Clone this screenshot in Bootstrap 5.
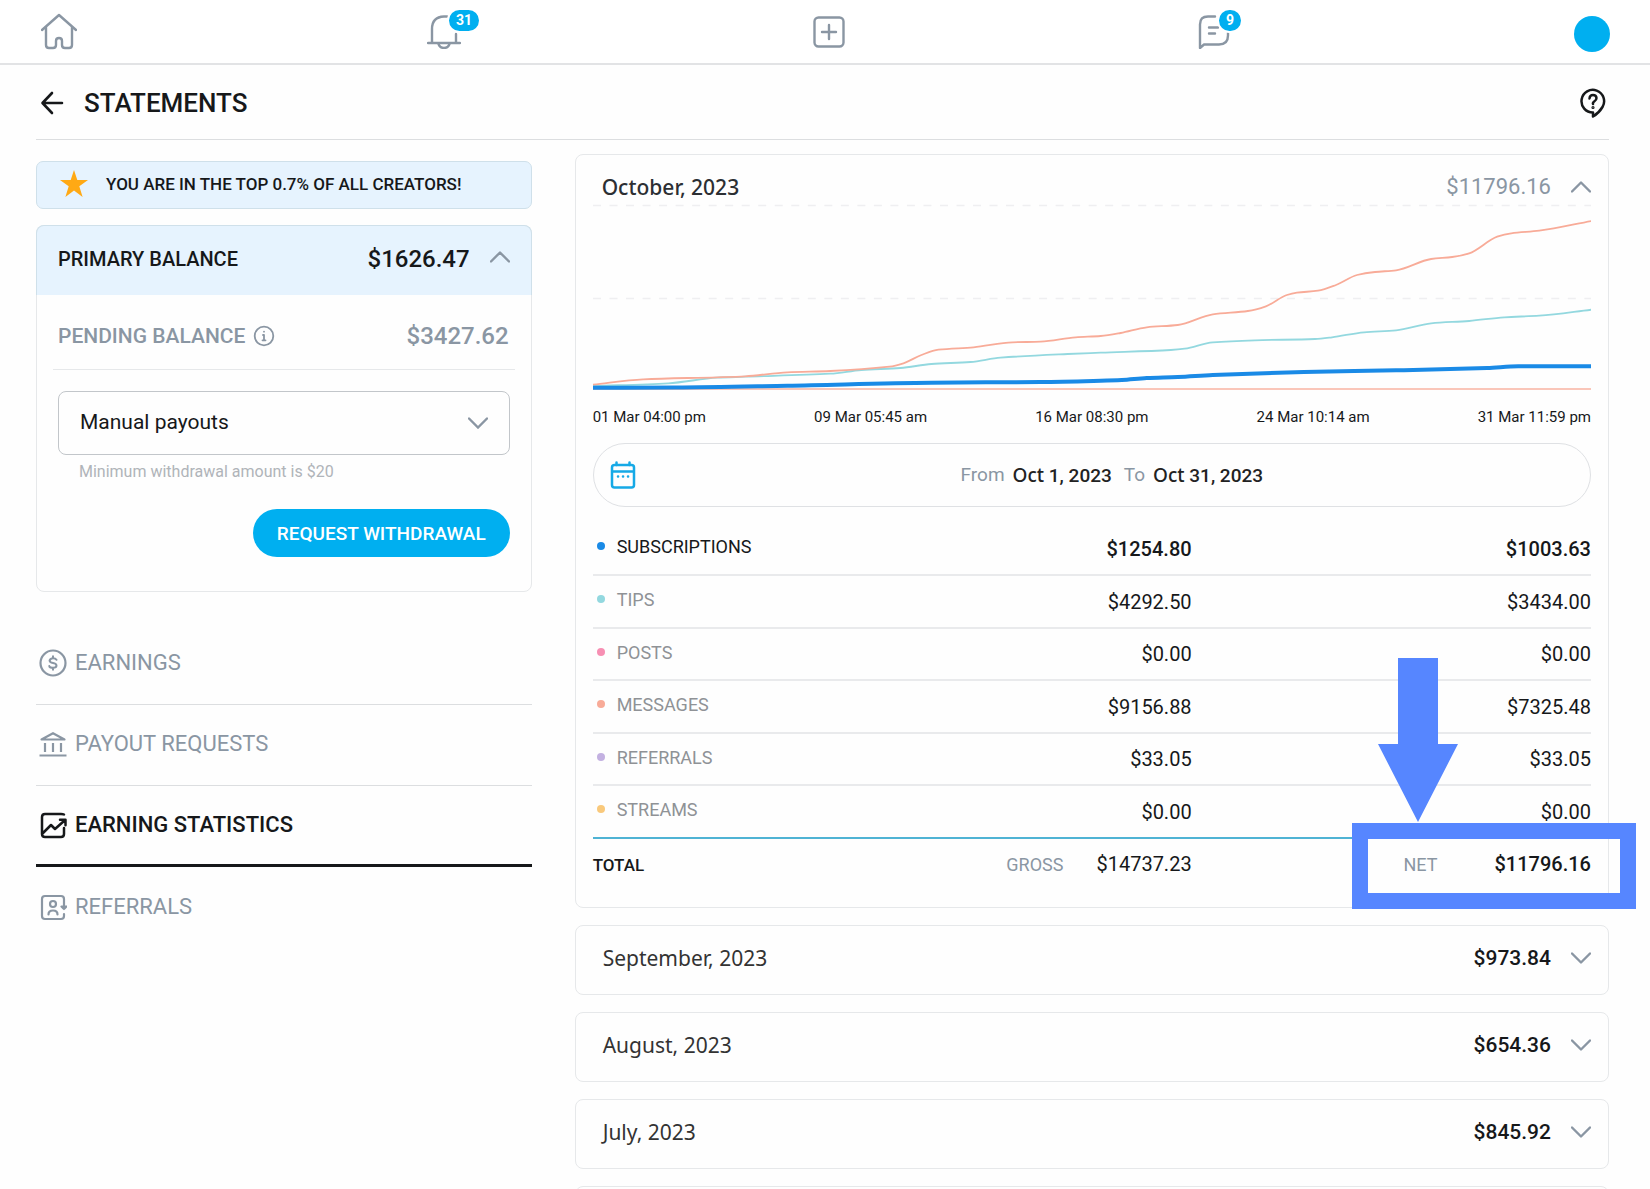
<!DOCTYPE html>
<html lang="en">
<head>
<meta charset="utf-8">
<meta name="viewport" content="width=device-width, initial-scale=1">
<title>Statements</title>
<link href="https://cdn.jsdelivr.net/npm/bootstrap@5.3.0/dist/css/bootstrap.min.css" rel="stylesheet">
<style>
  :root { --ink: #16181a; --muted: #8a96a3; --line: #e6e8ea; --brand: #00aff0; --callout: #5686ff; }
  body { font-family: Roboto, "Liberation Sans", sans-serif; color: var(--ink); background: #fefefe; font-size: 20px; line-height: 24px; height: 100vh; overflow: hidden; }
  svg { display: block; flex: none; }
  .ico { fill: none; stroke: currentColor; stroke-width: 2; stroke-linecap: round; stroke-linejoin: round; }
  a { text-decoration: none; }
  .topbar { height: 65px; padding: 0 26px 0 34px; border-bottom: 2px solid #e2e3e5; color: var(--muted); background: #fff; }
  .topbar a { width: 50px; color: inherit; }
  .count-pill { position: absolute; top: -7px; left: 28px; min-width: 25px; height: 25px; padding: 0 7px; border: 2px solid #fff; border-radius: 13px; background: var(--brand); color: #fff; font-size: 14px; line-height: 21px; font-weight: 700; text-align: center; }
  .avatar-dot { width: 36px; height: 36px; margin-top: 4px; border-radius: 50%; background: var(--brand); }
  .page { padding: 0 41px 0 36px; }
  .page-head { height: 75px; border-bottom: 1px solid #dcdee0; padding: 2px 3px 0 4px; }
  .page-head .title-group { gap: 20px; }
  .page-head h1 { font-size: 26px; line-height: 30px; font-weight: 500; }
  .page-head button, .plain-btn { background: none; border: 0; padding: 0; color: inherit; }
  .split { --bs-gutter-x: 43px; }
  .side { padding-top: 21px; }
  .main-col { padding-top: 14px; }
  .promo { height: 48px; padding: 0 23px 2px; border: 1px solid #cfe0ea; border-radius: 7px; background: #e6f3fe; font-size: 17px; font-weight: 500; gap: 18px; }
  .panel { border: 1px solid var(--line); border-radius: 8px; background: #fefefe; }
  .balance { margin-top: 16px; }
  .balance-head { height: 70px; padding: 0 21px 3px; background: #e6f3fe; border: 1px solid #cfe0ea; border-bottom: 0; border-radius: 8px 8px 0 0; margin: -1px -1px 0; font-weight: 500; }
  .amount-lg { font-size: 24px; }
  .pending { height: 75px; margin: 0 16px; padding: 8px 6px 0 5px; border-bottom: 1px solid var(--line); color: var(--muted); font-size: 21px; font-weight: 500; }
  .payout { padding: 21px 21px 34px; }
  .payout .form-select { height: 64px; padding: 0 56px 0 21px; font-size: 21px; color: var(--ink); border: 1px solid #c2c6ca; border-radius: 8px; background-color: #fefefe; background-position: right 21px center; background-size: 20px 12px; background-image: url("data:image/svg+xml,%3csvg xmlns='http://www.w3.org/2000/svg' viewBox='0 0 20 12'%3e%3cpath fill='none' stroke='%238a96a3' stroke-width='2.4' stroke-linecap='round' d='M1 1.5l9 9 9-9'/%3e%3c/svg%3e"); }
  .payout small { display: block; padding: 5px 21px 0; font-size: 16px; line-height: 24px; color: #b0b4b9; }
  .payout .btn { margin-top: 25px; height: 48px; padding: 2px 23px 0; border-radius: 24px; background: var(--brand); color: #fff; font-size: 19px; font-weight: 500; }
  .side-nav { margin-top: 32px; }
  .side-nav a { height: 81px; gap: 8px; padding: 0 3px 2px; border-bottom: 1px solid #dcdee0; color: var(--muted); font-size: 22px; }
  .side-nav a.current { color: var(--ink); font-weight: 500; border-bottom: 3px solid var(--ink); padding-bottom: 1px; }
  .side-nav a:last-child { border-bottom: 0; }
  .month-name { font-family: "Noto Sans", "Open Sans", sans-serif; color: #333; font-size: 21px; line-height: 24px; font-weight: 400; }
  .month-name.open-month { font-weight: 500; color: #2c2f33; }
  .chev { color: var(--muted); }
  .detail { height: 754px; padding: 0 17px; }
  .detail-head { padding: 18px 0 0 9px; height: 45px; color: var(--muted); }
  .amount-md { font-size: 22px; }
  .chart { width: 100%; height: 192px; }
  .axis-labels { font-size: 15px; line-height: 20px; margin-top: 15px; }
  .range { height: 64px; margin-top: 16px; border: 1px solid #dfe1e4; border-radius: 32px; padding: 0 2px 0 16px; color: var(--muted); font-size: 19px; }
  .range strong { color: #222; font-weight: 500; }
  .range strong i { font-family: "Noto Sans", sans-serif; font-style: normal; }
  .sums { margin-top: 16px; width: 100%; table-layout: fixed; border-collapse: collapse; }
  .sums tr { height: 52px; border-bottom: 2px solid #e9eaec; }
  .sums tr:nth-child(even) { height: 53px; }
  .sums th { font-weight: 400; font-size: 18px; color: #8f9296; padding: 0 0 3px; }
  .sums td { padding: 0; text-align: right; }
  .sums .lead-row th { color: var(--ink); }
  .sums .lead-row td, .sums .net-sum { font-weight: 500; }
  .sums tbody tr:last-child { border-bottom: 2px solid #4fb3d4; }
  .sums tfoot tr { border-bottom: 0; }
  .sums tfoot th { color: var(--ink); font-size: 17px; font-weight: 500; padding: 0; }
  .sums tfoot span { font-size: 18px; color: var(--muted); }
  .dot { display: inline-block; width: 8px; height: 8px; border-radius: 50%; margin: 0 12px 3px 4px; }
  .collapsed { height: 70px; margin-top: 17px; padding: 0 17px 5px 27px; }
  .collapsed .amount-md { font-weight: 500; font-size: 21px; }
  .callout-box { position: absolute; right: -28px; bottom: -2px; width: 284px; height: 86px; border: 16px solid var(--callout); }
  .callout-arrow { position: absolute; right: 150px; bottom: 85px; }
</style>
</head>
<body>
<nav class="topbar d-flex justify-content-between align-items-center">
  <a href="#" class="d-flex justify-content-center" aria-label="Home"><svg class="ico" width="36" height="38" viewBox="0 0 36 38"><path stroke-width="2.400" d="M1 17 18 2l17 15M5 14v18q0 3 3 3h4q3 0 3-3v-4q0-3 3-3t3 3v4q0 3 3 3h4q3 0 3-3V14"/></svg></a>
  <a href="#" class="d-flex justify-content-center position-relative" aria-label="Notifications"><svg class="ico" width="34" height="34" viewBox="0 0 34 34"><path stroke-width="2.400" d="M20 1.500h-3Q5 2 5 14v13M29 19v8M1 28h32M11.500 29q1.500 4 5.500 4t5.500-4"/></svg><span class="count-pill">31</span></a>
  <a href="#" class="d-flex justify-content-center" aria-label="New post"><svg class="ico" width="32" height="32" viewBox="0 0 32 32"><rect x="1.500" y="1.500" width="29" height="29" rx="4" stroke-width="2.400"/><path stroke-width="2.400" d="M16 9v14M9 16h14"/></svg></a>
  <a href="#" class="d-flex justify-content-center position-relative" aria-label="Messages"><svg class="ico" width="32" height="34" viewBox="0 0 32 34"><path stroke-width="2.400" d="M17 1.500h-7Q2 1.500 2 9.500v23.500L6 29.500h15q9 0 9-9v-3M11 12.500h9M11 18.500h6"/></svg><span class="count-pill">9</span></a>
  <a href="#" aria-label="Profile"><span class="avatar-dot d-block"></span></a>
</nav>
<div class="page">
  <header class="page-head d-flex align-items-center justify-content-between">
    <div class="title-group d-flex align-items-center">
      <button type="button" aria-label="Back"><svg class="ico" width="24" height="24" viewBox="0 0 24 24"><path stroke-width="2.600" d="M22 12H3M12 2 2.500 12 12 22"/></svg></button>
      <h1 class="m-0">STATEMENTS</h1>
    </div>
    <button type="button" aria-label="Help"><svg class="ico" width="26" height="30" viewBox="0 0 26 30"><path stroke-width="2.500" d="M13 24.500A11.300 11.300 0 1 1 22.500 19Q19 25 13 28.500z"/><path stroke-width="2.500" d="M9.500 10.500q.3-3.500 3.500-3.500t3.500 3q0 2-2 3.200T13 16"/><circle cx="13" cy="19.500" r=".6" stroke-width="2"/></svg></button>
  </header>
  <div class="row split">
    <aside class="col-4 side">
      <div class="promo d-flex align-items-center"><svg width="28" height="28" viewBox="0 0 28 28"><path fill="#ffa914" d="m14 0 3.300 10H28l-8.700 6.300L22.600 27 14 20.600 5.400 27l3.300-10.700L0 10h10.700z"/></svg>YOU ARE IN THE TOP 0.7% OF ALL CREATORS!</div>
      <section class="panel balance">
        <div class="balance-head d-flex align-items-center">
          <span>PRIMARY BALANCE</span><span class="amount-lg ms-auto">$1626.47</span>
          <button type="button" class="plain-btn ms-3 ps-1 mb-1 chev" aria-label="Collapse"><svg class="ico" width="20" height="12" viewBox="0 0 20 12"><path stroke-width="2.400" d="m1 10.500 9-9 9 9"/></svg></button>
        </div>
        <div class="pending d-flex align-items-center">
          <span>PENDING BALANCE</span>
          <svg class="ico ms-2" width="22" height="22" viewBox="0 0 22 22"><circle cx="11" cy="11" r="9.300" stroke-width="1.800"/><path stroke-width="1.800" d="M10 10h1v5M9.500 15.300h3M11 6.600v.1"/></svg>
          <span class="amount-lg ms-auto">$3427.62</span>
        </div>
        <form class="payout">
          <select class="form-select" aria-label="Payout mode"><option>Manual payouts</option></select>
          <small>Minimum withdrawal amount is $20</small>
          <div class="text-end"><button type="button" class="btn">REQUEST WITHDRAWAL</button></div>
        </form>
      </section>
      <nav class="side-nav">
        <a href="#" class="d-flex align-items-center"><svg class="ico" width="28" height="28" viewBox="0 0 28 28"><circle cx="14" cy="14" r="12.500" stroke-width="2.200"/><path d="M17.500 10.800q-1-1.500-3.500-1.500t-3.400 2.200Q10.600 13.500 14 14t3.500 2.600Q17.500 18.800 14 18.800t-3.700-1.700M14 7.300v2M14 18.800v2"/></svg>EARNINGS</a>
        <a href="#" class="d-flex align-items-center"><svg class="ico" width="28" height="28" viewBox="0 0 28 28"><path stroke-width="2.200" stroke-linecap="butt" d="M2.500 9.500 14 3.200l11.500 6.300zM.5 25.500h27M6 13v9M14 13v9M22 13v9"/></svg>PAYOUT REQUESTS</a>
        <a href="#" class="d-flex align-items-center current" aria-current="page"><svg class="ico" width="28" height="28" viewBox="0 0 28 28"><path stroke-width="2.500" d="M25 3.500Q24 3 22 3H6Q3 3 3 6v17q0 3 3 3h16q3 0 3-3v-6M4 22l8-8 4 4 9-8M21 8.700h5.500v5.500"/></svg>EARNING STATISTICS</a>
        <a href="#" class="d-flex align-items-center"><svg class="ico" width="28" height="28" viewBox="0 0 28 28"><path stroke-width="2.200" d="M25 7V6q0-3-3-3H6Q3 3 3 6v17q0 3 3 3h16q3 0 3-3v-2M9.500 21.500q0-4 4.500-4t4.500 4M25 7v9M22.500 13.500h5L25 16z"/><circle cx="14" cy="11" r="3" stroke-width="2.200"/></svg>REFERRALS</a>
      </nav>
    </aside>
    <main class="col-8 main-col">
      <section class="panel detail position-relative">
        <div class="detail-head d-flex align-items-center">
          <h2 class="month-name open-month m-0">October, 2023</h2>
          <span class="amount-md ms-auto">$11796.16</span>
          <button type="button" class="plain-btn ms-3 ps-1 chev" aria-label="Collapse October"><svg class="ico" width="20" height="12" viewBox="0 0 20 12"><path stroke-width="2.400" d="m1 10.500 9-9 9 9"/></svg></button>
        </div>
        <svg class="chart" viewBox="0 0 997 192" preserveAspectRatio="none" fill="none" role="img" aria-label="Cumulative earnings">
          <path d="M0 5.500H997M0 98.500H997" stroke="#efeff1" stroke-width="1.500" stroke-dasharray="8 8.500"/>
          <path d="M0 189H997" stroke="#f8b3a2" stroke-width="1.500"/>
          <path id="tips" stroke="#93d8df" stroke-width="1.800"/>
          <path id="messages" stroke="#f8ab98" stroke-width="1.800"/>
          <path id="subs" stroke="#1a8ae6" stroke-width="4"/>
        </svg>
        <div class="axis-labels d-flex justify-content-between"><span>01 Mar 04:00 pm</span><span>09 Mar 05:45 am</span><span>16 Mar 08:30 pm</span><span>24 Mar 10:14 am</span><span>31 Mar 11:59 pm</span></div>
        <div class="range d-flex align-items-center">
          <svg class="ico" width="26" height="28" viewBox="0 0 26 28" style="color:#16a9e6"><rect x="2" y="4" width="22" height="22.500" rx="2.500" stroke-width="2.500"/><path stroke-width="2.500" d="M2.500 10.500h21M6.500 1.500V4M19.500 1.500V4"/><path stroke-width="2.500" d="M8 15.500h.1M13 15.500h.1M18 15.500h.1"/></svg>
          <div class="flex-fill d-flex justify-content-center gap-2"><span>From</span><strong><i>Oct</i> 1, 2023</strong><span class="ms-1">To</span><strong><i>Oct</i> 31, 2023</strong></div>
        </div>
        <table class="sums">
          <colgroup><col style="width:30%"><col style="width:30%"><col style="width:40%"></colgroup>
          <tbody>
            <tr class="lead-row"><th scope="row"><span class="dot" style="background:#1a8ae6"></span>SUBSCRIPTIONS</th><td>$1254.80</td><td>$1003.63</td></tr>
            <tr><th scope="row"><span class="dot" style="background:#93d8df"></span>TIPS</th><td>$4292.50</td><td>$3434.00</td></tr>
            <tr><th scope="row"><span class="dot" style="background:#f78fb3"></span>POSTS</th><td>$0.00</td><td>$0.00</td></tr>
            <tr><th scope="row"><span class="dot" style="background:#f8ab98"></span>MESSAGES</th><td>$9156.88</td><td>$7325.48</td></tr>
            <tr><th scope="row"><span class="dot" style="background:#c3b1e1"></span>REFERRALS</th><td>$33.05</td><td>$33.05</td></tr>
            <tr><th scope="row"><span class="dot" style="background:#f9c97c"></span>STREAMS</th><td>$0.00</td><td>$0.00</td></tr>
          </tbody>
          <tfoot>
            <tr><th scope="row">TOTAL</th><td><span class="me-4 pe-1">GROSS</span> $14737.23</td><td class="net-sum"><span class="me-5 pe-1 fw-normal">NET</span> $11796.16</td></tr>
          </tfoot>
        </table>
        <svg class="callout-arrow" width="80" height="164" viewBox="0 0 80 164" aria-hidden="true"><path fill="#5686ff" d="M20 0h40v86h20L40 164 0 86h20z"/></svg>
        <div class="callout-box" aria-hidden="true"></div>
      </section>
      <section class="panel collapsed d-flex align-items-center"><h2 class="month-name m-0">September, 2023</h2><span class="amount-md ms-auto">$973.84</span><button type="button" class="plain-btn ms-3 ps-1 chev" aria-label="Expand September"><svg class="ico" width="20" height="12" viewBox="0 0 20 12"><path stroke-width="2.400" d="m1 1.500 9 9 9-9"/></svg></button></section>
      <section class="panel collapsed d-flex align-items-center"><h2 class="month-name m-0">August, 2023</h2><span class="amount-md ms-auto">$654.36</span><button type="button" class="plain-btn ms-3 ps-1 chev" aria-label="Expand August"><svg class="ico" width="20" height="12" viewBox="0 0 20 12"><path stroke-width="2.400" d="m1 1.500 9 9 9-9"/></svg></button></section>
      <section class="panel collapsed d-flex align-items-center"><h2 class="month-name m-0">July, 2023</h2><span class="amount-md ms-auto">$845.92</span><button type="button" class="plain-btn ms-3 ps-1 chev" aria-label="Expand July"><svg class="ico" width="20" height="12" viewBox="0 0 20 12"><path stroke-width="2.400" d="m1 1.500 9 9 9-9"/></svg></button></section>
      <section class="panel collapsed"></section>
    </main>
  </div>
</div>
<script src="https://cdn.jsdelivr.net/npm/bootstrap@5.3.0/dist/js/bootstrap.bundle.min.js"></script>
<script>
  // Chart series as x,y pairs; each is drawn as a smooth curve through its points.
  const series = {
    messages: [0,184.7,50,179.3,124,177.3,152,176.3,194,172.3,237,171,296,166.7,310,163.3,328,155,345,149.7,380,147.3,419,142.3,447,141.7,482,137.3,507,136,527,133,553,127.3,584,125,619,114.3,654,111,672,106.3,693,95,703,92.7,724,90.7,742,85,763,75,781,72,802,70.3,837,59,858,57,875,53.3,903,36.7,917,33.3,945,30.7,997,21],
    tips: [0,186,75,183.3,124,177.7,152,176.7,237,173.7,268,170,307,168,338,164,377,162,407,157.7,474,154,507,152.7,577,150,591,148.7,619,142.3,661,140.3,721,139,738,137.3,770,132.3,802,130.3,837,123.3,875,121,910,117.3,945,115.7,997,109.7],
    subs: [0,187.7,82,187.5,194,185.7,338,182.7,447,182,507,180.7,528,180,553,178,584,177,619,175,710,172,802,170.3,893,168,924,166.3,997,166.3]
  };
  for (const [id, v] of Object.entries(series)) {
    const p = [];
    for (let i = 0; i < v.length; i += 2) p.push([v[i], v[i + 1]]);
    const slope = (a, b) => (b[1] - a[1]) / (b[0] - a[0]);
    const m = p.map((q, i) => {
      if (!i) return slope(q, p[1]);
      if (i === p.length - 1) return slope(p[i - 1], q);
      const s = slope(p[i - 1], q), t = slope(q, p[i + 1]);
      return s * t <= 0 ? 0 : 2 * s * t / (s + t);
    });
    let d = `M${p[0]}`;
    for (let i = 1; i < p.length; i++) {
      const h = (p[i][0] - p[i - 1][0]) / 3;
      d += `C${p[i - 1][0] + h} ${p[i - 1][1] + m[i - 1] * h} ${p[i][0] - h} ${p[i][1] - m[i] * h} ${p[i]}`;
    }
    document.getElementById(id).setAttribute('d', d);
  }
</script>
</body>
</html>
